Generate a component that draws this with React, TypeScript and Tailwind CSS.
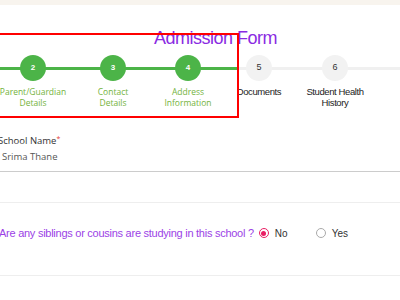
import React from 'react';

type Step = { n: number; label: string[]; done: boolean; w: string };

const steps: Step[] = [
    { n: 2, label: ['Parent/Guardian', 'Details'], done: true, w: 'w-[80px]' },
    { n: 3, label: ['Contact', 'Details'], done: true, w: 'w-[80px]' },
    { n: 4, label: ['Address', 'Information'], done: true, w: 'w-[70px]' },
    { n: 5, label: ['Documents'], done: false, w: 'w-[72px]' },
    { n: 6, label: ['Student Health', 'History'], done: false, w: 'w-[80px]' },
];

function StepItem({ step }: { step: Step }) {
    return (
        <div className={`${step.w} shrink-0 flex flex-col items-center`}>
            <div
                className={`w-[26px] h-[26px] rounded-full flex items-center justify-center ${
                    step.done ? 'bg-[#4cb448] text-white font-bold text-[8px]' : 'bg-[#f2f2f2] text-[#333] text-[9px]'
                }`}
            >
                {step.n}
            </div>
            <div
                className={`mt-[5px] text-center leading-[11px] whitespace-nowrap ${
                    step.done
                        ? "text-[#74b33c] text-[8.5px] font-['Open_Sans',sans-serif]"
                        : "text-[#222] text-[9.5px] tracking-[-0.4px] font-['Liberation_Sans',Arial,sans-serif]"
                }`}
            >
                {step.label.map(l => (
                    <div key={l}>{l}</div>
                ))}
            </div>
        </div>
    );
}

function Radio({ checked }: { checked: boolean }) {
    return (
        <span
            className={`w-[10px] h-[10px] rounded-full border flex items-center justify-center bg-white ${
                checked ? 'border-[#e91e63]' : 'border-[#aaa]'
            }`}
        >
            {checked && <span className="w-[5px] h-[5px] rounded-full bg-[#e91e63]" />}
        </span>
    );
}

export default function App() {
    return (
        <div className="w-[400px] h-[300px] overflow-hidden bg-white relative font-['Liberation_Sans',Arial,sans-serif]">
            <div className="h-[5px] bg-[#f8f4ee]" />

            <h1 className="mt-[22px] w-[431px] text-center text-[18px] leading-[22px] tracking-[-0.5px] text-[#8a2be2]">
                Admission Form
            </h1>

            {/* stepper */}
            <div className="relative mt-[6px]">
                <div className="absolute left-0 right-0 top-[12px] h-[3px] flex">
                    <div className="w-[237px] bg-[#4cb448]" />
                    <div className="flex-1 bg-[#f0f0f0]" />
                </div>
                <div className="relative flex -ml-[7px]">
                    {steps.map(s => (
                        <StepItem key={s.n} step={s} />
                    ))}
                </div>
            </div>

            {/* highlight box */}
            <div className="absolute top-[33px] -left-[4px] w-[243px] h-[85px] border-2 border-[#ff0000]" />

            {/* school name */}
            <div className="mt-[26px] border-b border-[#cccccc] pb-[7px] font-['Open_Sans',sans-serif]">
                <div className="-ml-[2px] text-[9.5px] leading-[14px] text-[#333]">
                    School Name<span className="align-top text-[7px] leading-[10px] text-[#e53935]">*</span>
                </div>
                <div className="mt-[2px] ml-[2px] text-[9.5px] leading-[14px] text-[#555]">Srima Thane</div>
            </div>

            <div className="mt-[30px] h-px bg-[#eeeeee]" />

            {/* siblings question */}
            <div className="flex items-center pt-[22px] pb-[34px] border-b border-[#eeeeee]">
                <span className="-ml-[1px] text-[11px] leading-[16px] tracking-[-0.26px] text-[#9b3fe6]">
                    Are any siblings or cousins are studying in this school ?
                </span>
                <label className="ml-[5px] flex items-center gap-[6px] text-[10px] text-[#333]">
                    <Radio checked />
                    No
                </label>
                <label className="ml-[28px] flex items-center gap-[6px] text-[10px] text-[#333]">
                    <Radio checked={false} />
                    Yes
                </label>
            </div>
        </div>
    );
}
